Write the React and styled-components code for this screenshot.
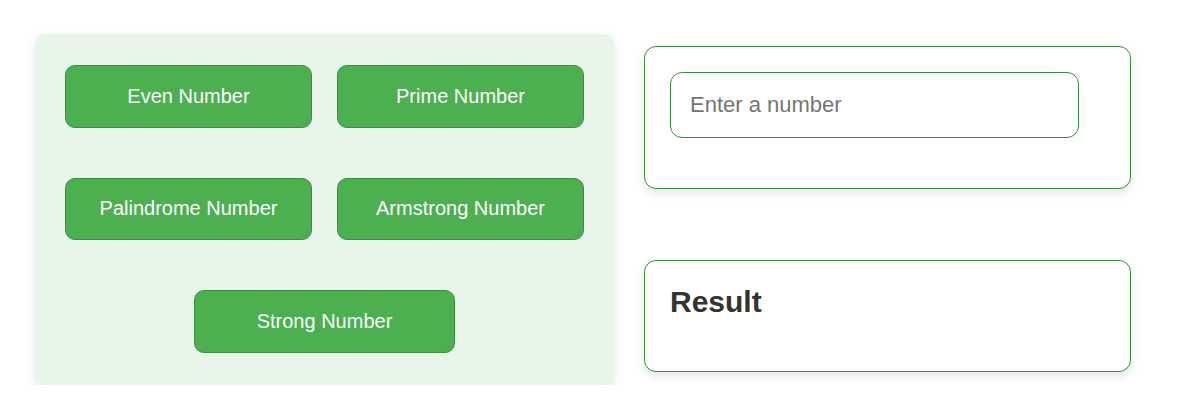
import React, { useState } from "react";
import styled, { createGlobalStyle } from "styled-components";

const GlobalStyle = createGlobalStyle`
  body {
    margin: 0;
    background: #ffffff;
    font-family: "Liberation Sans", Arial, sans-serif;
  }
`;

const Page = styled.div`
  display: flex;
  align-items: flex-start;
  gap: 30px;
  padding: 34px 0 0 35px;
`;

const ButtonPanel = styled.div`
  width: 579px;
  box-sizing: border-box;
  padding: 31px 30px 32px;
  background: #e8f5e9;
  border-radius: 10px;
  box-shadow: 0 4px 10px rgba(0, 0, 0, 0.1);
  display: grid;
  grid-template-columns: 1fr 1fr;
  column-gap: 25px;
  row-gap: 50px;
  justify-items: center;
`;

const CheckButton = styled.button`
  width: ${(p) => (p.$wide ? "261px" : "100%")};
  grid-column: ${(p) => (p.$wide ? "1 / -1" : "auto")};
  height: 62.5px;
  background: #4caf50;
  color: #ffffff;
  border: 1px solid #3d8b40;
  border-radius: 10px;
  font-family: "Liberation Sans", Arial, sans-serif;
  font-size: 20px;
  cursor: pointer;
`;

const Side = styled.div`
  display: flex;
  flex-direction: column;
  gap: 71px;
  padding-top: 12px;
`;

const Card = styled.div`
  width: 487px;
  box-sizing: border-box;
  height: ${(p) => p.$height}px;
  padding: 25px;
  background: #ffffff;
  border: 1px solid #388e3c;
  border-radius: 12px;
  box-shadow: 0 4px 10px rgba(0, 0, 0, 0.1);
`;

const NumberInput = styled.input`
  width: 409px;
  height: 66px;
  box-sizing: border-box;
  padding: 0 19px;
  border: 1px solid #388e3c;
  border-radius: 12px;
  font-family: "Liberation Sans", Arial, sans-serif;
  font-size: 22px;
  color: #333;
  outline: none;

  &::placeholder {
    color: #757575;
  }
`;

const ResultTitle = styled.h2`
  margin: 0;
  font-size: 30px;
  font-weight: bold;
  color: #333333;
  line-height: 32px;
`;

const checks = [
  "Even Number",
  "Prime Number",
  "Palindrome Number",
  "Armstrong Number",
  "Strong Number",
];

export default function App() {
  const [value, setValue] = useState("");
  return (
    <>
      <GlobalStyle />
      <Page>
        <ButtonPanel>
          {checks.map((label, i) => (
            <CheckButton key={label} $wide={i === checks.length - 1}>
              {label}
            </CheckButton>
          ))}
        </ButtonPanel>
        <Side>
          <Card $height={143}>
            <NumberInput
              type="number"
              placeholder="Enter a number"
              value={value}
              onChange={(e) => setValue(e.target.value)}
            />
          </Card>
          <Card $height={112}>
            <ResultTitle>Result</ResultTitle>
          </Card>
        </Side>
      </Page>
    </>
  );
}
